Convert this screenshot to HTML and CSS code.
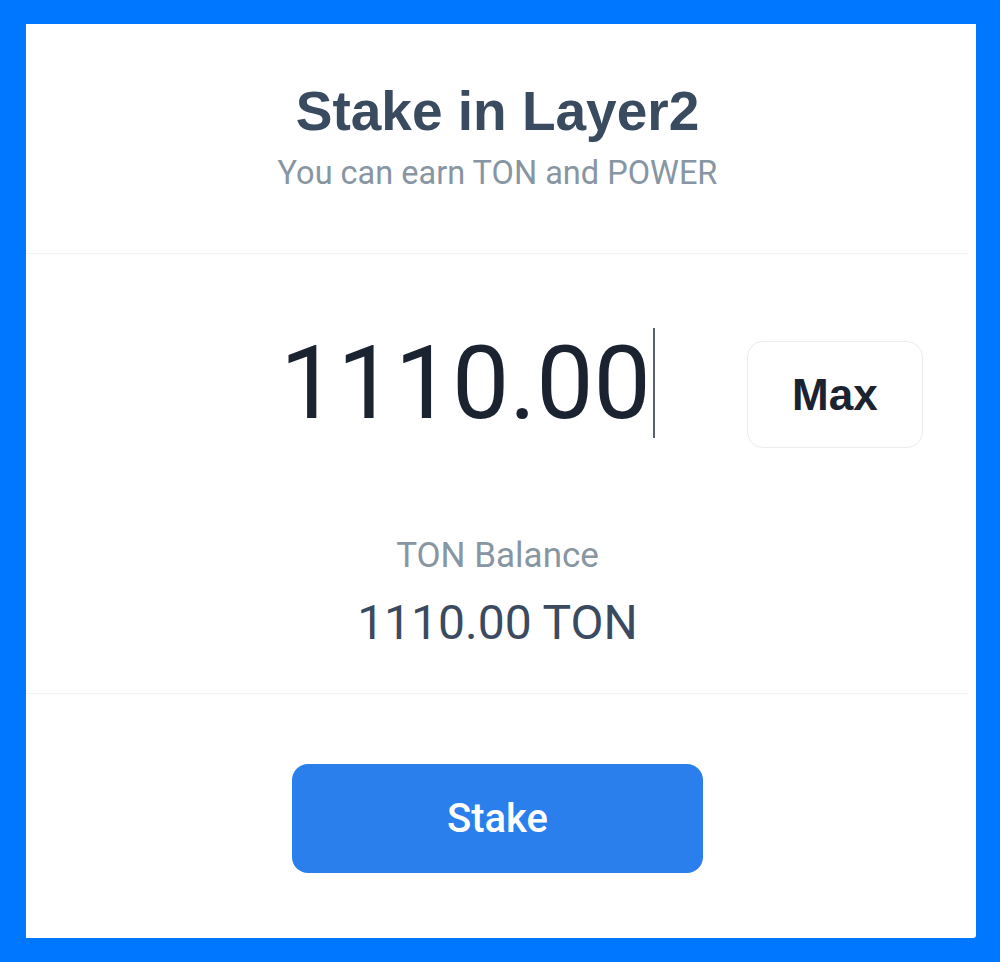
FILE: index.html
```html
<!DOCTYPE html>
<html lang="en">
<head>
<meta charset="utf-8">
<title>Stake in Layer2</title>
<link rel="stylesheet" href="styles.css">
</head>
<body>
<div class="card">
  <header class="head">
    <h1 class="title">Stake in Layer2</h1>
    <p class="subtitle">You can earn TON and POWER</p>
  </header>
  <section class="main">
    <div class="amount-row">
      <div class="amount"><span class="amount-text">1110.00</span><span class="caret"></span></div>
      <button class="max-btn" type="button">Max</button>
    </div>
    <div class="balance-label">TON Balance</div>
    <div class="balance-value">1110.00 TON</div>
  </section>
  <footer class="foot">
    <button class="stake-btn" type="button">Stake</button>
  </footer>
</div>
</body>
</html>
```

FILE: styles.css
```css
html, body {
  margin: 0;
  padding: 0;
}
body {
  background: #0077ff;
  width: 1000px;
  height: 962px;
  overflow: hidden;
}
.card {
  box-sizing: border-box;
  margin: 24px 0 0 26px;
  width: 950px;
  height: 914px;
  background: #ffffff;
  border-bottom-right-radius: 3px;
  padding-right: 7px;
  display: flex;
  flex-direction: column;
}
.head {
  box-sizing: border-box;
  height: 230px;
  border-bottom: 1px solid #f1f3f4;
  padding-top: 56px;
  text-align: center;
}
.title {
  margin: 0;
  font-family: "Liberation Sans", Arial, sans-serif;
  font-weight: 700;
  font-size: 55px;
  line-height: 62px;
  color: #3a4a5f;
}
.subtitle {
  margin: 12px 0 0;
  font-family: Roboto, "Noto Sans", sans-serif;
  font-size: 32.5px;
  line-height: 38px;
  color: #8796a2;
}
.main {
  box-sizing: border-box;
  height: 440px;
  border-bottom: 1px solid #f1f3f4;
  padding-top: 74px;
  display: flex;
  flex-direction: column;
  align-items: center;
}
.amount-row {
  align-self: stretch;
  display: flex;
  align-items: flex-start;
  padding-left: 254px;
}
.amount {
  display: flex;
  align-items: flex-start;
  font-family: Roboto, "Noto Sans", sans-serif;
  font-size: 102px;
  line-height: 110px;
  color: #1b2230;
}
.caret {
  display: block;
  width: 2px;
  height: 110px;
  background: #5a6270;
  margin-left: 2px;
}
.max-btn {
  margin: 13px 0 0 92px;
  box-sizing: border-box;
  width: 176px;
  height: 107px;
  border: 1px solid #ececec;
  border-radius: 16px;
  background: #ffffff;
  font-family: "Liberation Sans", Arial, sans-serif;
  font-weight: 700;
  font-size: 44px;
  color: #1b2230;
  padding: 0;
}
.balance-label {
  margin-top: 88px;
  font-family: Roboto, "Noto Sans", sans-serif;
  font-size: 35px;
  line-height: 40px;
  color: #8796a2;
}
.balance-value {
  margin-top: 20px;
  font-family: Roboto, "Noto Sans", sans-serif;
  font-size: 48px;
  line-height: 54px;
  color: #3b4a5e;
}
.foot {
  flex: 1;
  display: flex;
  justify-content: center;
  align-items: flex-start;
  padding-top: 70px;
}
.stake-btn {
  width: 411px;
  height: 109px;
  border: none;
  border-radius: 16px;
  background: #2a7fec;
  color: #ffffff;
  font-family: Roboto, "Noto Sans", sans-serif;
  font-weight: 500;
  font-size: 40px;
  padding: 0;
}
```
